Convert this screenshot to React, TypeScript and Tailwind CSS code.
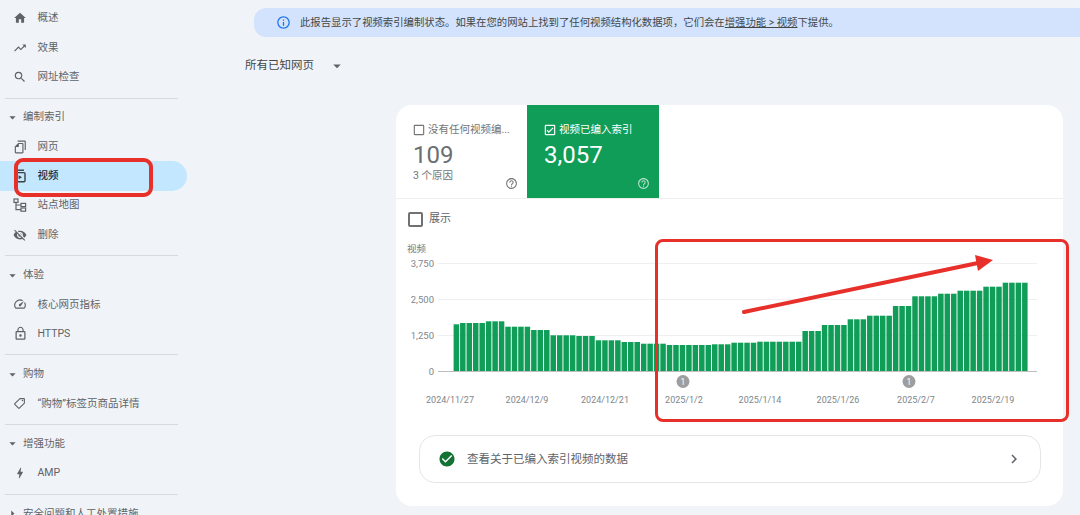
import type { ReactNode } from "react";
import {
  MdArrowDropDown,
  MdArrowRight,
  MdBolt,
  MdCheckBoxOutlineBlank,
  MdCheckCircle,
  MdChevronRight,
  MdHelpOutline,
  MdHome,
  MdInfoOutline,
  MdLockOutline,
  MdOutlineCheckBox,
  MdOutlineFileCopy,
  MdOutlineLocalOffer,
  MdOutlineSpeed,
  MdSearch,
  MdTrendingUp,
  MdVisibilityOff,
} from "react-icons/md";

const VideoIcon = () => (
  <svg width="14" height="14" viewBox="0 0 14 14" fill="none" stroke="#3c4043" strokeWidth="1.4">
    <path d="M3 1.2h8" />
    <rect x="2" y="3.6" width="10" height="9.2" rx="1" />
    <path d="M5.6 6.2l3.4 2-3.4 2z" fill="#3c4043" stroke="none" />
  </svg>
);

const SitemapIcon = () => (
  <svg width="14" height="14" viewBox="0 0 14 14" fill="none" stroke="#5f6368" strokeWidth="1.2">
    <rect x="1" y="1" width="4" height="3.4" />
    <rect x="8" y="5.4" width="4.6" height="3.2" />
    <rect x="8" y="10" width="4.6" height="3.2" />
    <path d="M3 4.4v7.2h5M3 7h5" />
  </svg>
);

const Item = ({ icon, label, active }: { icon: ReactNode; label: string; active?: boolean }) => (
  <div
    className={`flex h-[29.33px] items-center rounded-r-full pl-[13px] ${
      active ? "bg-[#c2e7ff] font-medium text-[#1f2937]" : "text-[#5f6368]"
    }`}
  >
    <span className="flex w-[24.5px] shrink-0 items-center">{icon}</span>
    <span>{label}</span>
  </div>
);

const Group = ({ label, open = true }: { label: string; open?: boolean }) => (
  <div className="flex h-[29.33px] items-center pl-[5px] text-[#5f6368]">
    <span className="flex w-[18px] shrink-0 items-center">
      {open ? <MdArrowDropDown size={15} /> : <MdArrowRight size={15} />}
    </span>
    <span>{label}</span>
  </div>
);

const Divider = () => <div className="mt-[6px] mb-[4.1px] ml-[5px] h-px w-[173px] bg-[#d7dadf]" />;

const Sidebar = () => (
  <aside className="w-[187px] shrink-0 pt-[3.6px] text-[10.5px]">
    <Item icon={<MdHome size={14} />} label="概述" />
    <Item icon={<MdTrendingUp size={14} />} label="效果" />
    <Item icon={<MdSearch size={14} />} label="网址检查" />
    <Divider />
    <Group label="编制索引" />
    <Item icon={<MdOutlineFileCopy size={14} className="-scale-x-100" />} label="网页" />
    <Item icon={<VideoIcon />} label="视频" active />
    <Item icon={<SitemapIcon />} label="站点地图" />
    <Item icon={<MdVisibilityOff size={14} />} label="删除" />
    <Divider />
    <Group label="体验" />
    <Item icon={<MdOutlineSpeed size={14} />} label="核心网页指标" />
    <Item icon={<MdLockOutline size={15} />} label="HTTPS" />
    <Divider />
    <Group label="购物" />
    <Item icon={<MdOutlineLocalOffer size={13} className="-scale-x-100" />} label="“购物”标签页商品详情" />
    <Divider />
    <Group label="增强功能" />
    <Item icon={<MdBolt size={14} />} label="AMP" />
    <Divider />
    <Group label="安全问题和人工处置措施" open={false} />
  </aside>
);

// bar heights in px, read off the reference, grouped by weekly steps
const steps: [number, number][] = [
  [1, 46.7], [4, 48], [3, 49.7], [4, 44.3], [3, 41], [4, 35.7], [3, 35], [4, 30.7], [3, 29], [4, 27.3],
  [7, 26], [3, 26.7], [4, 28.3], [7, 29.3], [3, 40], [4, 46], [3, 51.7], [4, 55.3], [3, 65], [4, 74.7],
  [3, 77.3], [4, 80.3], [3, 84.3], [4, 88.3],
];
const bars = steps.flatMap(([n, h]) => Array.from({ length: n }, () => h));

const ticks: [string, number][] = [["3,750", 263], ["2,500", 299], ["1,250", 335], ["0", 371]];
const dates: [string, number][] = [
  ["2024/11/27", 450], ["2024/12/9", 527], ["2024/12/21", 605], ["2025/1/2", 684],
  ["2025/1/14", 760], ["2025/1/26", 838], ["2025/2/7", 916], ["2025/2/19", 993],
];

const Chart = () => (
  <svg viewBox="0 0 667 172" className="block h-[172px] w-[667px]" fontFamily="Roboto, 'Noto Sans CJK SC', sans-serif">
    <g transform="translate(-396 -238)">
      <text x="407" y="252" fontSize="9.5" fill="#757575">视频</text>
      {ticks.map(([label, y]) => (
        <g key={label}>
          <text x="434" y={y + 3.5} fontSize="9.5" textAnchor="end" fill="#80868b">{label}</text>
          <line x1="438" x2="1037" y1={y + 0.5} y2={y + 0.5} stroke={y === 371 ? "#bdbdbd" : "#eeeff1"} />
        </g>
      ))}
      {bars.map((h, i) => (
        <rect key={i} x={453.6 + i * 6.46} y={371 - h} width="5.5" height={h} fill="#0f9d58" />
      ))}
      {[683, 909].map((x) => (
        <g key={x}>
          <circle cx={x} cy="381.5" r="6.5" fill="#9e9e9e" />
          <text x={x} y="384.5" fontSize="8.5" textAnchor="middle" fill="#fff">1</text>
        </g>
      ))}
      {dates.map(([label, x]) => (
        <text key={label} x={x} y="402.5" fontSize="9" textAnchor="middle" fill="#80868b">{label}</text>
      ))}
    </g>
  </svg>
);

const Card = () => (
  <section className="ml-[209px] mt-[29px] w-[667px] overflow-hidden rounded-2xl bg-white pb-[23px]">
    <div className="flex h-[93.5px] border-b border-[#eceef0]">
      <div className="relative w-[131px] pl-[17px] pt-[17px] text-[#757575]">
        <div className="flex items-center gap-[2px] text-[10.5px]">
          <MdCheckBoxOutlineBlank size={14} className="-ml-[1px]" />
          <span>没有任何视频编...</span>
        </div>
        <div className="mt-[2px] text-[24px] leading-[30px] text-[#6b6f72]">109</div>
        <div className="-mt-[1px] text-[10.5px] leading-[13px]">3 个原因</div>
        <MdHelpOutline size={13} className="absolute bottom-[8px] right-[9px]" />
      </div>
      <div className="relative w-[132px] bg-[#0f9d58] pl-[17px] pt-[17px] text-white">
        <div className="flex items-center gap-[2px] text-[10.5px]">
          <MdOutlineCheckBox size={14} className="-ml-[1px]" />
          <span>视频已编入索引</span>
        </div>
        <div className="mt-[2px] text-[24px] leading-[30px]">3,057</div>
        <MdHelpOutline size={13} className="absolute bottom-[8px] right-[9px] text-[#b7e1cd]" />
      </div>
    </div>
    <div className="flex h-[39.5px] items-center gap-[6px] pl-[12px] pt-[2px] text-[11px] text-[#5f6368]">
      <span className="h-[15px] w-[15px] rounded-[2px] border-2 border-[#6f7275]" />
      <span>展示</span>
    </div>
    <Chart />
    <div className="ml-[23px] mr-[22px] mt-[25px] flex h-[48px] items-center rounded-2xl border border-[#e3e5e8] pl-[18px] pr-[17px] text-[11.5px] text-[#5f6368]">
      <MdCheckCircle size={18} className="text-[#137333]" />
      <span className="ml-[11px] flex-1 pt-px">查看关于已编入索引视频的数据</span>
      <MdChevronRight size={18} />
    </div>
  </section>
);

export default function App() {
  return (
    <div className="relative flex h-[515px] w-[1080px] overflow-hidden bg-[#f0f4f9] font-['Roboto','Noto_Sans_CJK_SC',sans-serif]">
      <Sidebar />
      <main className="min-w-0 flex-1">
        <div className="ml-[67px] mt-[8px] flex h-[29px] items-center rounded-l-xl bg-[#d3e3fd] pl-[22px] text-[10.37px] text-[#444746]">
          <MdInfoOutline size={15} className="mr-[9px] text-[#1a73e8]" />
          <span>
            此报告显示了视频索引编制状态。如果在您的网站上找到了任何视频结构化数据项，它们会在
            <span className="underline">增强功能 &gt; 视频</span>下提供。
          </span>
        </div>
        <div className="ml-[58px] mt-[19px] flex h-[20px] items-center text-[11.5px] text-[#444746]">
          <span>所有已知网页</span>
          <MdArrowDropDown size={18} className="ml-[14px] text-[#5f6368]" />
        </div>
        <Card />
      </main>

      {/* red annotations drawn over the screenshot */}
      <div className="absolute left-[14px] top-[158px] h-[39px] w-[139px] rounded-[9px] border-4 border-[#e8302a]" />
      <div className="absolute left-[655px] top-[239px] h-[183px] w-[414px] rounded-[8px] border-[3px] border-[#e8302a]" />
      <svg className="absolute left-[735px] top-[250px]" width="265" height="70" viewBox="735 250 265 70">
        <path d="M744 312L978 263" stroke="#e8302a" strokeWidth="4" strokeLinecap="round" />
        <path d="M975 255L993 260L978 271z" fill="#e8302a" />
      </svg>
    </div>
  );
}
